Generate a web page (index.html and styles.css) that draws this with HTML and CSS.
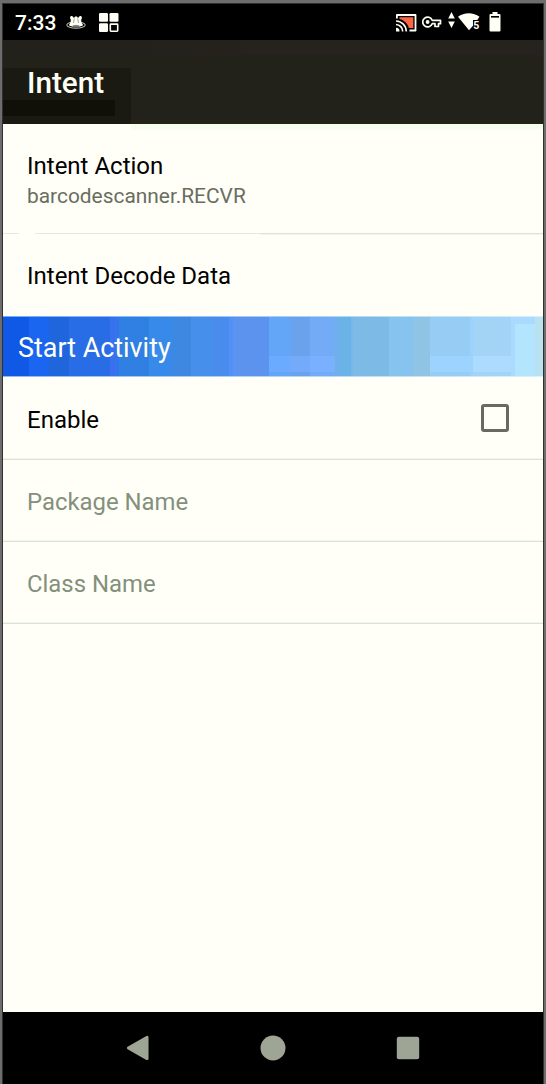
FILE: index.html
```html
<!DOCTYPE html>
<html lang="en">
<head>
<meta charset="utf-8">
<title>Intent</title>
<link rel="stylesheet" href="styles.css">
</head>
<body>
<div class="device">
  <div class="statusbar">
    <span class="clock">7:33</span>
    <svg class="bear" width="20" height="16" viewBox="0 0 20 16">
      <ellipse cx="10" cy="10" rx="9.200" ry="3.200" fill="none" stroke="#b9bbb0" stroke-width="1.100"/>
      <path d="M3 9.800 C4.500 8.500 5 6.500 4.700 4.600 C3.200 2.500 4.500 .300 6.500 1.300 L8 3 L9 1.600 H11 L12 3 L13.500 1.300 C15.500 .300 16.800 2.500 15.300 4.600 C15 6.500 15.500 8.500 17 9.800 C17 12.500 3 12.500 3 9.800Z" fill="#fffff6"/>
      <path d="M8.300 3.500 L7.500 8 M11.700 3.500 L12.500 8" stroke="#a5a89c" stroke-width="1"/>
      <ellipse cx="10" cy="11.300" rx="3.500" ry="1.300" fill="#777b70"/>
    </svg>
    <svg class="apps" width="20" height="20" viewBox="0 0 20 20" fill="#fffff6">
      <rect x="0" y="0" width="9" height="8.700" rx="1.200"/>
      <rect x="10.500" y="0" width="9" height="8.700" rx="1.200"/>
      <rect x="0" y="10.300" width="9" height="8.700" rx="1.200"/>
      <rect x="11.300" y="11.100" width="7.400" height="7.100" rx=".6" fill="none" stroke="#fffff6" stroke-width="1.600"/>
    </svg>
    <svg class="cast" width="21" height="18" viewBox="0 0 21 18">
      <path d="M.9 4.500 V1 H19.500 V16.500 H13.500" fill="none" stroke="#fffff6" stroke-width="1.800" stroke-linejoin="round"/>
      <path d="M3.500 3.300 H17.300 V14 H12.800 C11.500 9.300 8.500 6.300 3.500 5Z" fill="#fb6544"/>
      <path d="M0 7 A10.500 10.500 0 0 1 10.300 17.500 M0 10.500 A6.900 6.900 0 0 1 6.700 17.500" fill="none" stroke="#fffff6" stroke-width="1.600"/>
      <path d="M0 13.700 A3.600 3.600 0 0 1 3.500 17.500 H0Z" fill="#fffff6"/>
    </svg>
    <svg class="key" width="20" height="12" viewBox="0 0 20 12">
      <path d="M10.200 4.300 A4.900 4.900 0 1 0 10.200 7.700 H13 V10.500 H16.500 V7.700 H18.500 V4.300Z" fill="none" stroke="#fffff6" stroke-width="1.700" stroke-linejoin="round"/>
      <circle cx="5.600" cy="6" r="1.900" fill="#fffff6"/>
    </svg>
    <svg class="traffic" width="7" height="16" viewBox="0 0 7 16" fill="#fffff6">
      <path d="M3.500 0 L6.800 6.500 H.2Z M3.500 16 L6.800 9.500 H.2Z"/>
    </svg>
    <svg class="wifi" width="23" height="18" viewBox="0 0 23 18">
      <path d="M0 3.800 C6 -1 15.500 -1 21.500 3.800 L19.300 7 H15 V12.700 L11 17.300Z" fill="#fffff6"/>
      <text x="15.300" y="16.300" class="wifi-label">5</text>
    </svg>
    <svg class="battery" width="12" height="20" viewBox="0 0 12 20">
      <path d="M3.500 0 H8.500 V2 H10.500 Q11.500 2 11.500 3 V18.500 Q11.500 19.500 10.500 19.500 H1.500 Q.5 19.500 .5 18.500 V3 Q.5 2 1.500 2 H3.500Z" fill="#fffff6"/>
      <rect x="2" y="4" width="8" height="1.600" fill="#000"/>
    </svg>
  </div>
  <header class="appbar"><h1 class="title">Intent</h1></header>
  <main class="list">
    <div class="row action">
      <div class="label">Intent Action</div>
      <div class="summary">barcodescanner.RECVR</div>
    </div>
    <div class="row decode"><div class="label">Intent Decode Data</div></div>
    <h2 class="section">Start Activity</h2>
    <div class="row enable"><div class="label">Enable</div><span class="checkbox"></span></div>
    <div class="row disabled"><div class="label">Package Name</div></div>
    <div class="row disabled"><div class="label">Class Name</div></div>
  </main>
  <nav class="navbar">
    <svg width="28" height="28" viewBox="0 0 28 28"><path d="M4 14 L23.800 2.800 V25.200Z" fill="#9fa594" stroke="#9fa594" stroke-width="3" stroke-linejoin="round" transform="translate(.5 .700) scale(.95)"/></svg>
    <svg width="28" height="28" viewBox="0 0 28 28"><circle cx="14" cy="14" r="12.500" fill="#9fa594"/></svg>
    <svg width="28" height="28" viewBox="0 0 28 28"><rect x="2.800" y="2.800" width="22.400" height="22.400" rx="2" fill="#9fa594"/></svg>
  </nav>
</div>
</body>
</html>
```
FILE: styles.css
```css
* { box-sizing: border-box; }
body { margin: 0; font-family: Roboto, sans-serif; background: #6d6d6d; }
.device {
  width: 546px; height: 1084px;
  padding: 4px 3px 0;
  background: linear-gradient(#303030, #303030) 2px 3px / 542px 1081px no-repeat, #6d6d6d;
  display: flex; flex-direction: column;
}
.statusbar {
  height: 36px; background: #000; color: #fffff6;
  display: flex; align-items: flex-start; padding: 0 42px 0 12px;
}
.statusbar svg { flex: none; }
.clock { font-size: 21px; font-weight: 500; line-height: 38px; width: 51px; }
.bear { margin-top: 11px; }
.apps { margin: 9px 0 0 13px; }
.cast { margin: 10px 0 0 auto; }
.key { margin: 12px 0 0 5px; }
.traffic { margin: 8px 0 0 6px; }
.wifi { margin: 9px 0 0 3px; }
.wifi-label { font-size: 10.500px; font-weight: 700; fill: #fffff6; }
.battery { margin: 8px 0 0 8px; }
.appbar {
  height: 84px; padding: 24px 24px 0;
  background:
    linear-gradient(#101009, #101009) 0 60px / 112px 16px no-repeat,
    linear-gradient(#1a1a12, #1a1a12) 0 28px / 128px 56px no-repeat,
    linear-gradient(90deg, #22211b 25%, #26221d 45%) 0 0 / 100% 15px no-repeat,
    #22221b;
}
.title { margin: 0; font-size: 29.700px; font-weight: 500; line-height: 38px; color: #fffff6; }
.list {
  flex: 1;
  background: linear-gradient(#f5fded, #f8fef0) 128px 0 / 412px 6px no-repeat, #fffff8;
}
.row {
  height: 82px; padding: 2px 24px 0; display: flex; align-items: center;
  background:
    linear-gradient(#dbe4d3, #dbe4d3) 0 100% / 100% 1px no-repeat,
    linear-gradient(#f3f7eb, #f3f7eb) 0 100% / 100% 2px no-repeat;
}
.action {
  height: 110px; flex-direction: column; align-items: flex-start; padding-top: 27px;
  background:
    linear-gradient(#e2eadc, #e2eadc) 0 109px / 16px 1px no-repeat,
    linear-gradient(90deg, #e2ecdc 225px, #dbe4d3 225px) 32px 109px / 508px 1px no-repeat;
}
.label { font-size: 24px; line-height: 30px; color: #000; }
.summary { font-size: 20.900px; line-height: 26px; margin-top: 2px; color: #696d5f; }
.decode {
  padding-top: 1px;
  background: linear-gradient(#f3f7eb, #f3f7eb) 256px 0 / 284px 1px no-repeat;
}
.section {
  margin: 0; height: 61px; padding: 2px 15px 0;
  font-size: 26.900px; font-weight: 400; line-height: 61px; color: #fffff8;
  background:
    linear-gradient(90deg, #75acf0, #b5dff4 70%, #d0f2ff) 0 0 / 100% 1px no-repeat,
    linear-gradient(90deg, #94b8f0, #bfe0f5 70%, #d5f4ff) 0 60px / 100% 1px no-repeat,
    linear-gradient(#acdaff, #acdaff) 508px 0 / 24px 8px no-repeat,
    linear-gradient(90deg, #6aaaff 21px, #73aafa 21px 41px, #7ab0ff 41px) 266px 40px / 66px 16px no-repeat,
    linear-gradient(90deg, #9dd3ff 43px, #acdbff 43px 85px, transparent 85px) 427px 40px / 85px 16px no-repeat,
    linear-gradient(90deg,
      #1058e6 26px, #1a66f0 26px 46px, #1f66dc 46px 66px, #286de6 66px 107px,
      #3a70f0 107px 112px, #3375ea 112px 116px, #2f80e2 116px 146px, #3789ea 146px 170px, #3f88e2 170px 188px,
      #4690ec 188px 209px, #4a8cee 209px 226px, #5090f8 226px 230px, #5c93ee 230px 266px,
      #63a5f7 266px 288px, #6aa2ec 288px 307px, #74abf6 307px 332px, #6ab3dd 332px 334px,
      #74abf6 334px 336px, #6ab3e6 336px 348px, #75b8f0 348px 350px, #7dbbe6 350px 386px,
      #86c4ef 386px 410px, #8fc4e4 410px 427px, #97ccf5 427px 467px, #9bd2ff 467px 470px,
      #a4d4f5 470px 508px, #abdaff 508px 512px, #b3e5ff 512px 532px, #b8e2f0 532px);
}
.enable { height: 83px; justify-content: space-between; padding: 2px 34px 0 24px; }
.checkbox { width: 28px; height: 28px; border: 3px solid #69695d; border-radius: 3px; margin-top: -3px; }
.disabled .label { color: #84907c; font-size: 23.900px; }
.navbar {
  height: 72px; padding: 0 121px; background: #000;
  display: flex; align-items: center; justify-content: space-between;
}
```
